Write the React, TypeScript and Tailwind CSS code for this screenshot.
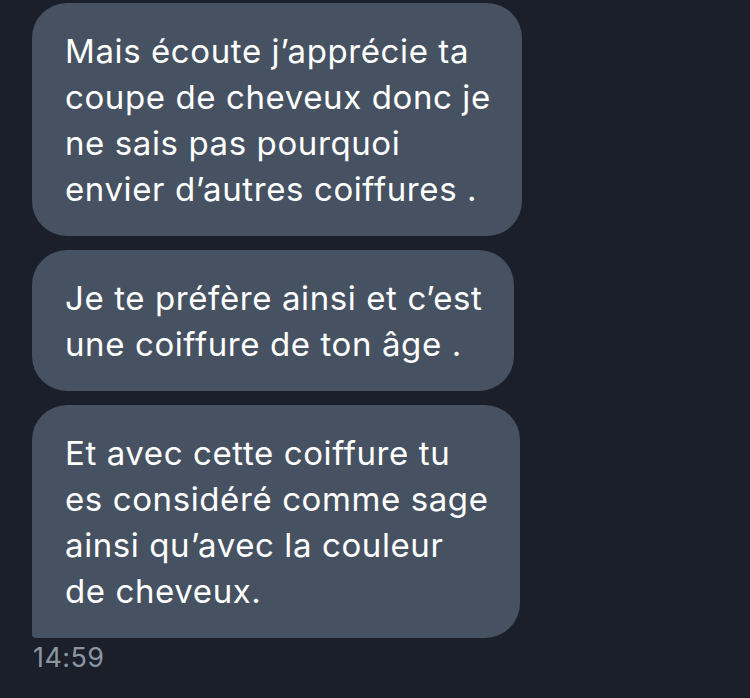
const messages = [
  {
    lines: ["Mais écoute j’apprécie ta", "coupe de cheveux donc je", "ne sais pas pourquoi", "envier d’autres coiffures ."],
    width: "w-[490px]",
    last: false,
  },
  {
    lines: ["Je te préfère ainsi et c’est", "une coiffure de ton âge ."],
    width: "w-[482px]",
    last: false,
  },
  {
    lines: ["Et avec cette coiffure tu", "es considéré comme sage", "ainsi qu’avec la couleur", "de cheveux."],
    width: "w-[488px]",
    last: true,
  },
];

export default function App() {
  return (
    <div className="h-[698px] w-[750px] overflow-hidden bg-[#1a1f29] pl-8 pt-[3px] font-['Inter',sans-serif]">
      <div className="flex flex-col gap-[14px]">
        {messages.map((m, i) => (
          <div
            key={i}
            className={`${m.width} whitespace-nowrap bg-[#465261] px-[33px] pt-[25px] pb-[24px] text-[33px] leading-[46px] tracking-[0.6px] text-white ${
              m.last ? "rounded-[35px] rounded-bl-[4px]" : "rounded-[35px]"
            }`}
          >
            {m.lines.map((l, j) => (
              <div key={j}>{l}</div>
            ))}
          </div>
        ))}
      </div>
      <div className="mt-[2px] pl-px text-[27px] leading-[36px] tracking-[0.4px] text-[#8b96a3]">14:59</div>
    </div>
  );
}
